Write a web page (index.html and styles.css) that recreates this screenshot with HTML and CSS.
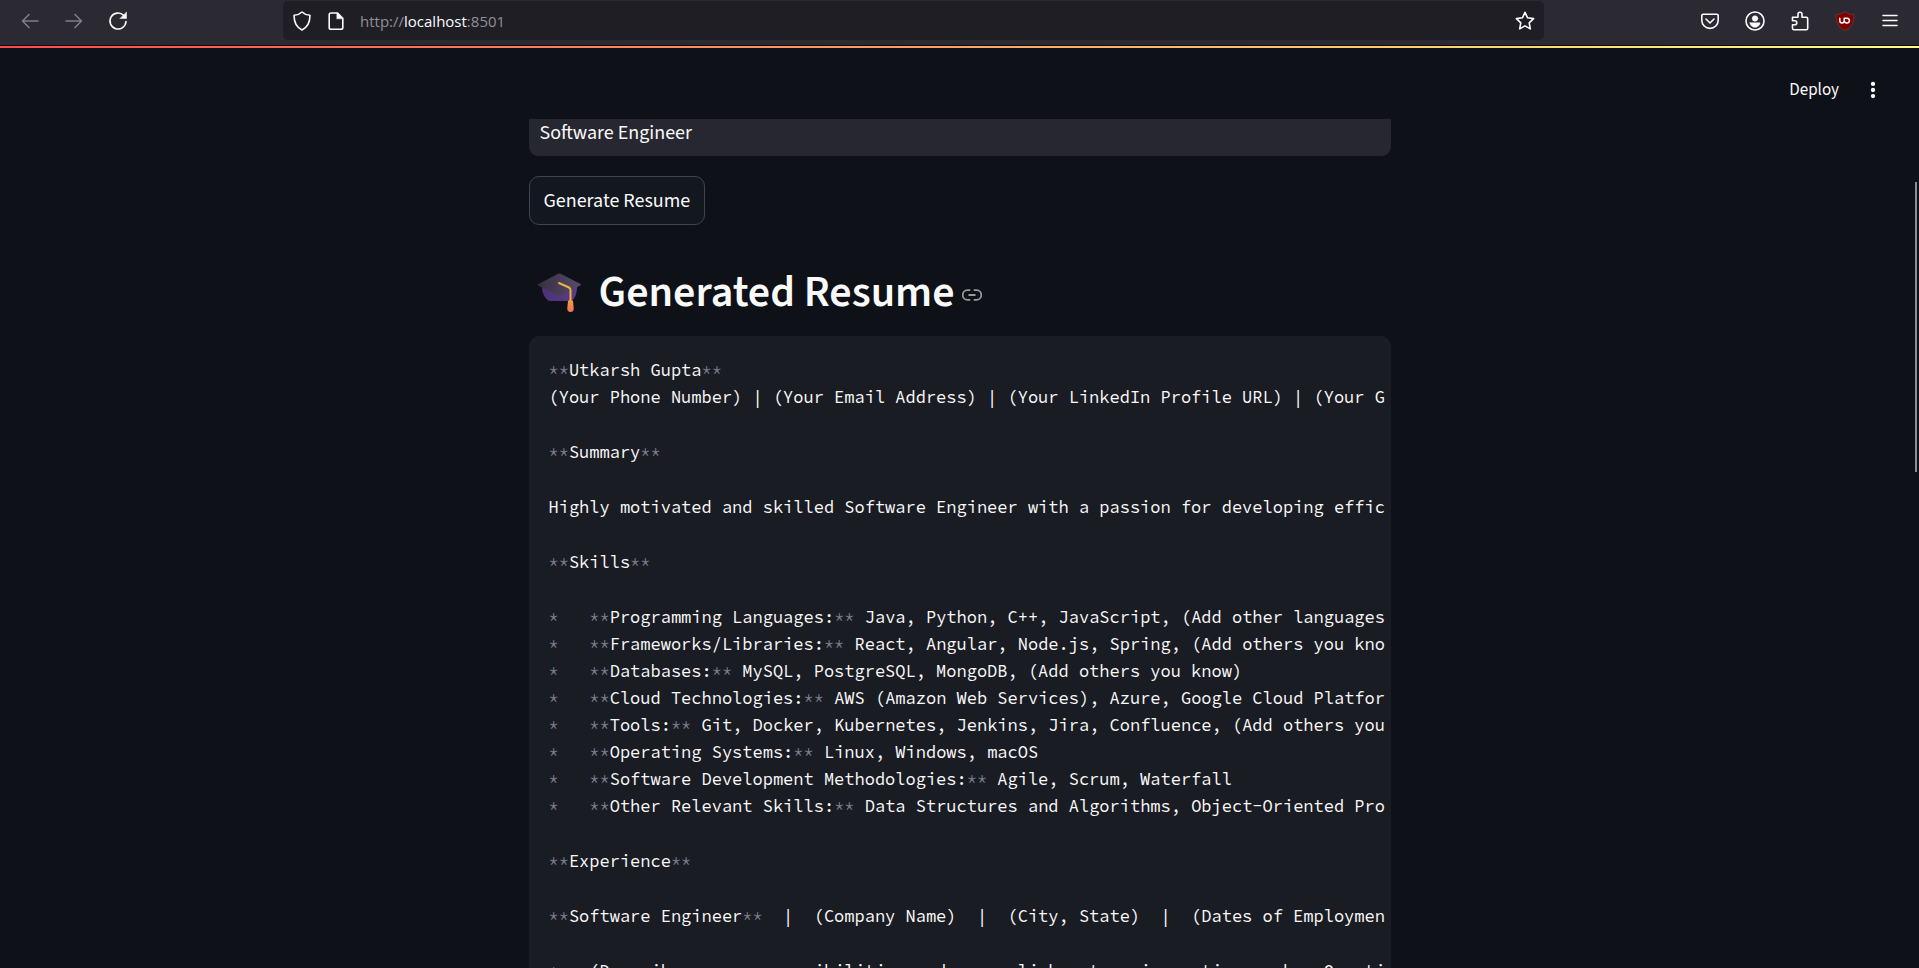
FILE: index.html
```
<!DOCTYPE html>
<html lang="en">
<head>
<meta charset="utf-8">
<title>Resume Generator</title>
<link rel="stylesheet" href="styles.css">
</head>
<body>
<nav class="toolbar" aria-label="Browser toolbar">
  <div class="nav-buttons">
    <button class="icon-btn dim" aria-label="Back"><svg viewBox="0 0 20 20"><path d="M18 10H2.500M9 3.500L2.500 10 9 16.500"/></svg></button>
    <button class="icon-btn dim" aria-label="Forward"><svg viewBox="0 0 20 20"><path d="M2 10h15.500M11 3.500l6.500 6.500-6.500 6.500"/></svg></button>
    <button class="icon-btn" aria-label="Reload"><svg viewBox="0 0 20 20"><path d="M18 10.500A8 8 0 1 1 15.600 4.300"/><path class="solid" d="M18.500 1.200v6.300h-6.300z"/></svg></button>
  </div>
  <div class="urlbar">
    <button class="icon-btn" aria-label="Tracking protection"><svg viewBox="0 0 20 20"><path d="M10 1c2 1.900 4.600 3.100 7.900 3.300.2 6.800-1.900 11.800-7.900 14.700C4 16.100 1.900 11.100 2.100 4.300 5.400 4.100 8 2.900 10 1z"/></svg></button>
    <button class="icon-btn" aria-label="Site information"><svg viewBox="0 0 20 20"><path d="M5 2h6.500l5.300 5.300v9.200a1.800 1.800 0 0 1-1.800 1.800H5a1.800 1.800 0 0 1-1.800-1.800V3.800A1.800 1.800 0 0 1 5 2z"/><path class="solid" d="M11 2l5.800 5.800H11z"/></svg></button>
    <span class="url">http://<span class="host">localhost</span>:8501</span>
    <button class="icon-btn" aria-label="Bookmark"><svg viewBox="0 0 20 20"><path d="M10 1.300l2.600 5.500 6 .8-4.400 4.200 1.100 6.100-5.300-3-5.300 3 1.100-6.100-4.400-4.200 6-.8z"/></svg></button>
  </div>
  <div class="extensions">
    <button class="icon-btn" aria-label="Pocket"><svg viewBox="0 0 20 20"><path d="M3.200 3.200h13.600c.8 0 1.400.6 1.400 1.400v4.600a8.200 8.200 0 0 1-16.400 0V4.600c0-.8.6-1.400 1.400-1.400z"/><path d="M6 8l4 4 4-4"/></svg></button>
    <button class="icon-btn" aria-label="Account"><svg viewBox="0 0 20 20"><circle cx="10" cy="10" r="9"/><circle class="solid" cx="10" cy="7.500" r="2.800"/><path class="solid" d="M5 11.800h10c0 2.700-2.400 4.500-5 4.500s-5-1.800-5-4.500z"/></svg></button>
    <button class="icon-btn" aria-label="Extensions"><svg viewBox="0 0 20 20"><path d="M2.500 6.300H8V3.200a2 2 0 0 1 4 0v3.100h4.300c.8 0 1.400.6 1.400 1.400v9.600c0 .8-.6 1.400-1.400 1.400H3.900c-.8 0-1.400-.6-1.400-1.400v-3.500h2.300a2 2 0 0 0 0-4H2.500z"/></svg></button>
    <button class="icon-btn" aria-label="uBlock Origin"><svg viewBox="0 0 20 20"><path class="shield" d="M10 .6c2.800 1.900 5.800 2.800 9 2.900.2 7.500-1.500 12.600-9 16-7.500-3.400-9.200-8.500-9-16C4.200 3.400 7.200 2.500 10 .6z"/><path class="mark" d="M4.800 7.200v2.600a2.200 2.200 0 0 0 4.400 0V7.200M9.200 9.600a2.600 2.400 0 1 0 2.800-2.400H10"/></svg></button>
    <button class="icon-btn" aria-label="Menu"><svg viewBox="0 0 20 20"><path d="M3 4.500h14M3 9.500h14M3 14.500h14"/></svg></button>
  </div>
</nav>
<div class="app">
  <header class="app-header">
    <button class="deploy">Deploy</button>
    <button class="more" aria-label="Main menu"><svg viewBox="0 0 20 20"><circle cx="10" cy="3.200" r="2.400"/><circle cx="10" cy="10" r="2.400"/><circle cx="10" cy="16.800" r="2.400"/></svg></button>
  </header>
  <main class="content">
    <input class="role" type="text" value="Software Engineer" aria-label="Job role">
    <button class="generate">Generate Resume</button>
    <h1 class="title" id="generated-resume">
      <svg class="cap" viewBox="0 0 44 40" aria-hidden="true">
        <defs>
          <linearGradient id="base" x1="0" y1="0" x2="1" y2="0"><stop offset="0" stop-color="#4a3277"/><stop offset="1" stop-color="#5b3c86"/></linearGradient>
          <linearGradient id="board" x1="0" y1="0" x2="1" y2="0"><stop offset="0" stop-color="#352f40"/><stop offset="1" stop-color="#594b6a"/></linearGradient>
          <linearGradient id="tassel" x1="0" y1="0" x2="0" y2="1"><stop offset="0" stop-color="#f59f3d"/><stop offset="1" stop-color="#f3705c"/></linearGradient>
        </defs>
        <path fill="url(#base)" d="M5 14h35c0 6-2 11-5 14H12c-4-2-7-8-7-14z"/>
        <path fill="url(#board)" d="M1 12.500Q0 11.800 1 11.200L21 .8q1.300-.6 2.600 0l19.500 10q1.500.9 0 1.700L24.500 22.300q-1.500.7-3 0z"/>
        <path fill="none" stroke="#eeb23f" stroke-width="2" stroke-linecap="round" stroke-linejoin="round" d="M22 10l10 4.500q1.500.8 1.500 2.500v11"/>
        <path fill="url(#tassel)" d="M31 28q2.500-2 5 0l.7 7q.3 4-3.200 4t-3.200-4z"/>
      </svg>
      <span>Generated Resume</span>
      <a class="anchor" href="#generated-resume" aria-label="Link to heading"><svg viewBox="0 0 20 20"><path d="M8.300 5.200H5.500a4.800 4.800 0 0 0 0 9.600h2.800M11.700 5.200h2.800a4.800 4.800 0 0 1 0 9.600h-2.800M6.500 10h7"/></svg></a>
    </h1>
    <pre class="code"><code class="lines"><span class="para"><i>**</i>Utkarsh Gupta<i>**</i>
(Your Phone Number) | (Your Email Address) | (Your LinkedIn Profile URL) | (Your G</span><span class="para"><i>**</i>Summary<i>**</i></span><span class="para">Highly motivated and skilled Software Engineer with a passion for developing effic</span><span class="para"><i>**</i>Skills<i>**</i></span><span class="para"><i>*</i>   <i>**</i>Programming Languages:<i>**</i> Java, Python, C++, JavaScript, (Add other languages
<i>*</i>   <i>**</i>Frameworks/Libraries:<i>**</i> React, Angular, Node.js, Spring, (Add others you kno
<i>*</i>   <i>**</i>Databases:<i>**</i> MySQL, PostgreSQL, MongoDB, (Add others you know)
<i>*</i>   <i>**</i>Cloud Technologies:<i>**</i> AWS (Amazon Web Services), Azure, Google Cloud Platfor
<i>*</i>   <i>**</i>Tools:<i>**</i> Git, Docker, Kubernetes, Jenkins, Jira, Confluence, (Add others you
<i>*</i>   <i>**</i>Operating Systems:<i>**</i> Linux, Windows, macOS
<i>*</i>   <i>**</i>Software Development Methodologies:<i>**</i> Agile, Scrum, Waterfall
<i>*</i>   <i>**</i>Other Relevant Skills:<i>**</i> Data Structures and Algorithms, Object-Oriented Pro</span><span class="para"><i>**</i>Experience<i>**</i></span><span class="para"><i>**</i>Software Engineer<i>**</i>  |  (Company Name)  |  (City, State)  |  (Dates of Employmen</span><span class="para"><i>*</i>   (Describe your responsibilities and accomplishments using action verbs. Quanti</span></code></pre>
  </main>
  <div class="scroll-thumb"></div>
</div>
</body>
</html>
```
FILE: styles.css
```
* { box-sizing: border-box; }

body {
  margin: 0;
  height: 100vh;
  display: flex;
  flex-direction: column;
  overflow: hidden;
  background: #0e1117;
  color: #fafafa;
  font-family: "Source Sans Pro", "Source Sans 3", "Noto Sans CJK SC", sans-serif;
  font-size: 20px;
}

button {
  margin: 0;
  padding: 0;
  border: 0;
  background: none;
  color: inherit;
  font: inherit;
}

svg { display: block; }

/* Browser toolbar */
.toolbar {
  display: flex;
  flex: none;
  height: 46px;
  padding-bottom: 4px;
  background: #2b2a33;
  border-bottom: 1px solid #0c0c0d;
}

.nav-buttons {
  display: flex;
  align-items: center;
  gap: 24px;
  width: 283px;
  flex: none;
  padding-left: 20px;
}

.icon-btn { flex: none; }

.icon-btn svg {
  width: 20px;
  height: 20px;
  fill: none;
  stroke: #fbfbfe;
  stroke-width: 1.6;
  stroke-linecap: round;
  stroke-linejoin: round;
}

.icon-btn .solid { fill: #fbfbfe; stroke-width: 0.5; }
.icon-btn .shield { fill: #800000; stroke: #6a4a50; stroke-width: 0.6; }
.icon-btn .mark { stroke-width: 1.5; }
.dim { opacity: 0.4; }

.urlbar {
  flex: 1;
  display: flex;
  align-items: center;
  gap: 14px;
  margin: 1px 0;
  padding: 0 9px;
  border-radius: 5px;
  background: #1f1e25;
}

.url {
  flex: 1;
  color: #8f8f96;
  font: 15px "Open Sans", sans-serif;
}

.host { color: #fbfbfe; }

.extensions {
  display: flex;
  flex: none;
  align-items: center;
  justify-content: flex-end;
  gap: 25px;
  width: 375px;
  padding-right: 19px;
}

/* App */
.app {
  position: relative;
  flex: 1;
  min-height: 0;
  display: flex;
  flex-direction: column;
}

.app::before {
  content: "";
  flex: none;
  height: 2px;
  background: linear-gradient(90deg, #ff4b4b, #fffd80);
}

.app-header {
  flex: none;
  display: flex;
  align-items: center;
  justify-content: flex-end;
  gap: 24px;
  height: 71px;
  padding: 13px 36px 0 0;
}

.deploy { font-size: 17px; }

.more svg {
  width: 20px;
  height: 18px;
  fill: #fafafa;
}

.content {
  flex: 1;
  min-height: 0;
  display: flex;
  flex-direction: column;
  align-items: flex-start;
  width: 100%;
  max-width: 862px;
  margin: 0 auto;
  overflow: hidden;
}

.role {
  flex: none;
  width: 100%;
  height: 37px;
  padding: 0 11px 10px;
  border: 0;
  border-radius: 0 0 9px 9px;
  background: #262730;
  color: inherit;
  font: inherit;
}

.generate {
  flex: none;
  height: 49px;
  margin-top: 20px;
  padding: 0 14px;
  border: 1px solid #41444c;
  border-radius: 10px;
  background: #131720;
}

.title {
  flex: none;
  display: flex;
  align-items: center;
  height: 71px;
  margin: 32px 0 8px;
  padding-left: 8px;
  font-size: 44px;
  font-weight: 600;
  line-height: 52px;
}

.cap {
  width: 44px;
  height: 40px;
  margin-right: 18px;
}

.anchor {
  margin-left: 7px;
  padding-top: 4px;
}

.anchor svg {
  width: 20px;
  height: 20px;
  fill: none;
  stroke: #9a9b9d;
  stroke-width: 1.8;
}

.code {
  flex: none;
  width: 100%;
  margin: 0;
  padding: 21px 0 20px 20px;
  overflow: hidden;
  border-radius: 10px;
  background: #1a1c24;
  font: 17px/27px "Source Code Pro", "Noto Sans Mono", "DejaVu Sans Mono", monospace;
}

.lines {
  display: flex;
  flex-direction: column;
  gap: 28px;
  font: inherit;
}

.para { display: block; }

.para i {
  color: #7d808f;
  font-style: normal;
}

.scroll-thumb {
  position: absolute;
  top: 136px;
  right: 2px;
  width: 2px;
  height: 290px;
  background: #8e8f90;
}
```
